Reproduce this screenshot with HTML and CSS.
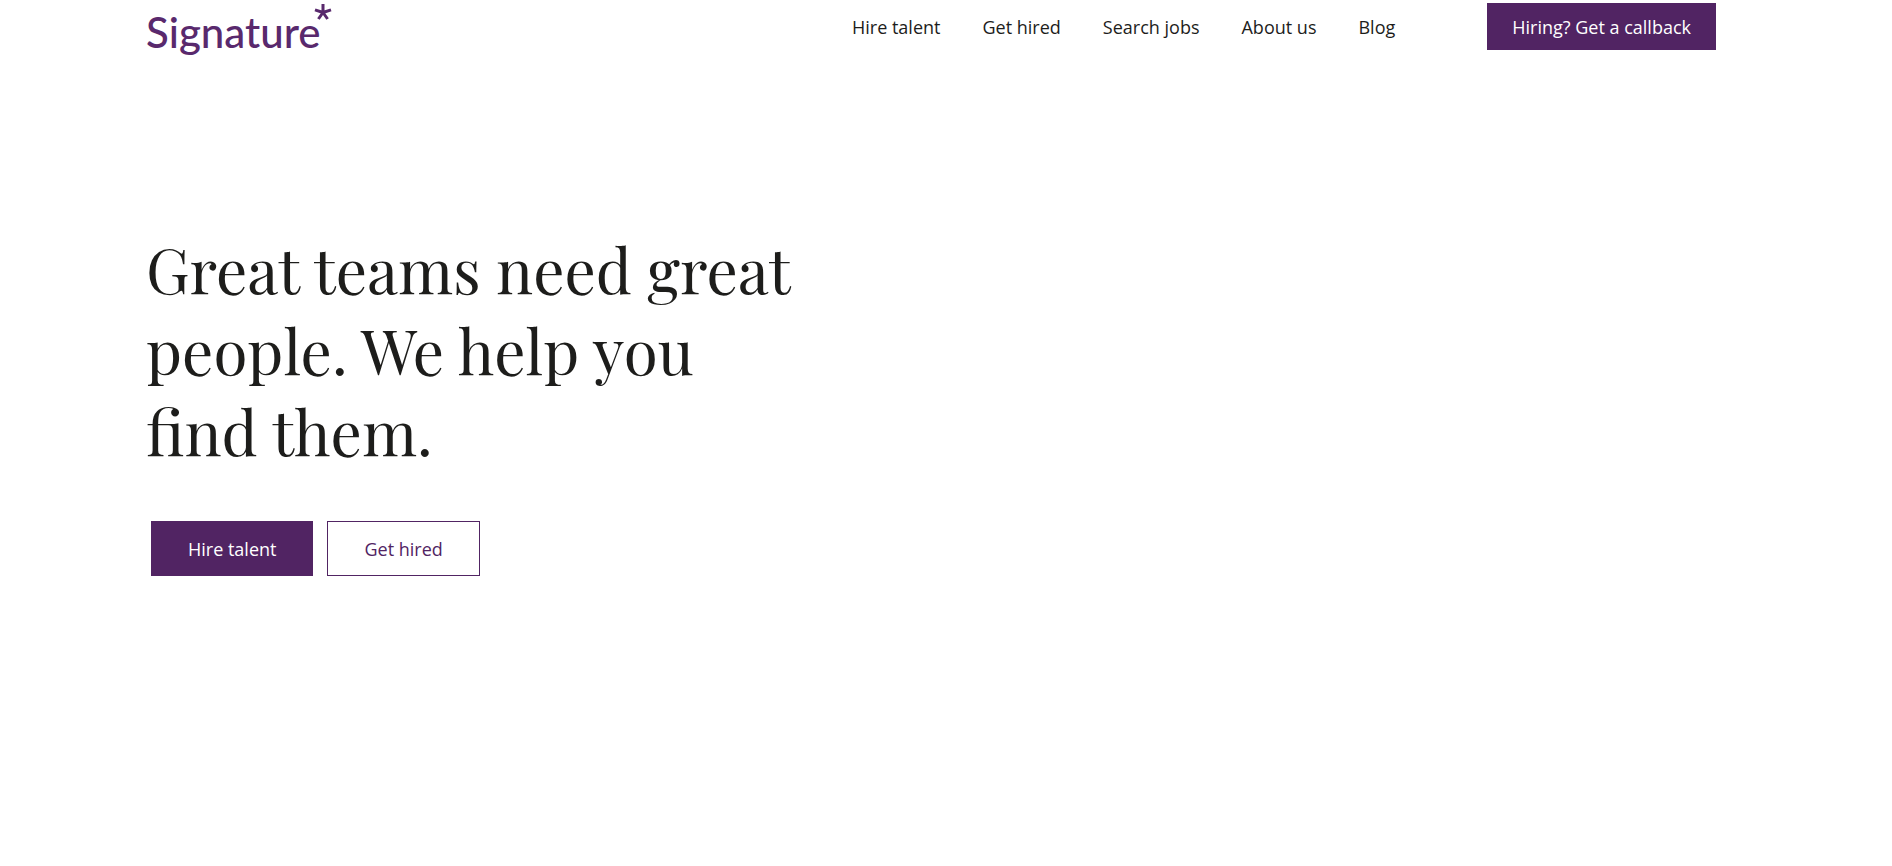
FILE: index.html
```html
<!DOCTYPE html>
<html lang="en">
<head>
  <meta charset="UTF-8"/>
  <meta name="viewport" content="width=device-width, initial-scale=1.0"/>
  <title>Signature</title>
  <link rel="stylesheet" href="styles.css">
</head>
<body>

  <!-- Header -->
  <header class="header container">
    <a class="logo" href="#" aria-label="Signature">
      <span class="logo-text">Signature</span>
      <svg class="logo-star" viewBox="0 0 18 18" aria-hidden="true">
        <path d="M9 9.5V1M9 9.5L1 6.8M9 9.5L17 6.8M9 9.5L4.4 16M9 9.5L13.6 16"/>
      </svg>
    </a>

    <nav class="nav">
      <a href="#">Hire talent</a>
      <a href="#">Get hired</a>
      <a href="#">Search jobs</a>
      <a href="#">About us</a>
      <a href="#">Blog</a>
    </nav>

    <button class="btn btn-callback" type="button">Hiring? Get a callback</button>
  </header>

  <!-- Hero -->
  <main class="hero container">
    <h1>Great teams need great people. We help you find them.</h1>
    <div class="hero-buttons">
      <button class="btn" type="button">Hire talent</button>
      <button class="btn btn-outline" type="button">Get hired</button>
    </div>
  </main>

</body>
</html>
```
FILE: styles.css
```css
* {
  box-sizing: border-box;
  margin: 0; padding: 0;
}

body {
  background: #fff;
  color: #1d1d1b;
  font-family: "Open Sans", sans-serif;
  font-size: 18px;
}

.container {
  width: 100%;
  max-width: 1600px;
  margin: 0 auto;
}

/* Header */
.header {
  display: flex;
  align-items: flex-start;
  padding: 3px 30px 0 0;
}

.logo {
  display: flex;
  align-items: flex-start;
  margin-right: auto;
  color: #59296d;
  text-decoration: none;
}

.logo-text {
  font-family: Lato, sans-serif;
  font-size: 42px;
  font-weight: 500;
  line-height: 58px;
}

.logo-star {
  width: 18px;
  height: 18px;
  margin-left: -7px;
  fill: none;
  stroke: currentColor;
  stroke-width: 3;
}

.nav {
  display: flex;
  gap: 42px;
  margin-right: 92px;
  line-height: 48px;
}

.nav a {
  color: #1d1d1b;
  text-decoration: none;
}

.btn {
  height: 55px;
  padding: 0 36px;
  border: 1px solid #512463;
  background: #512463;
  color: #fff;
  font-family: inherit;
  font-size: 18px;
  cursor: pointer;
}

.btn-callback {
  height: 47px;
  padding: 0 24px;
  font-weight: 500;
}

.btn-outline {
  background: #fff;
  color: #512463;
}

/* Hero */
.hero {
  padding-top: 167px;
}

h1 {
  max-width: 660px;
  font-family: "Playfair Display", "Liberation Serif", serif;
  font-size: 62px;
  font-weight: 400;
  line-height: 81px;
}

.hero-buttons {
  display: flex;
  flex-wrap: wrap;
  gap: 14px;
  margin-top: 50px;
  padding-left: 5px;
}
```
